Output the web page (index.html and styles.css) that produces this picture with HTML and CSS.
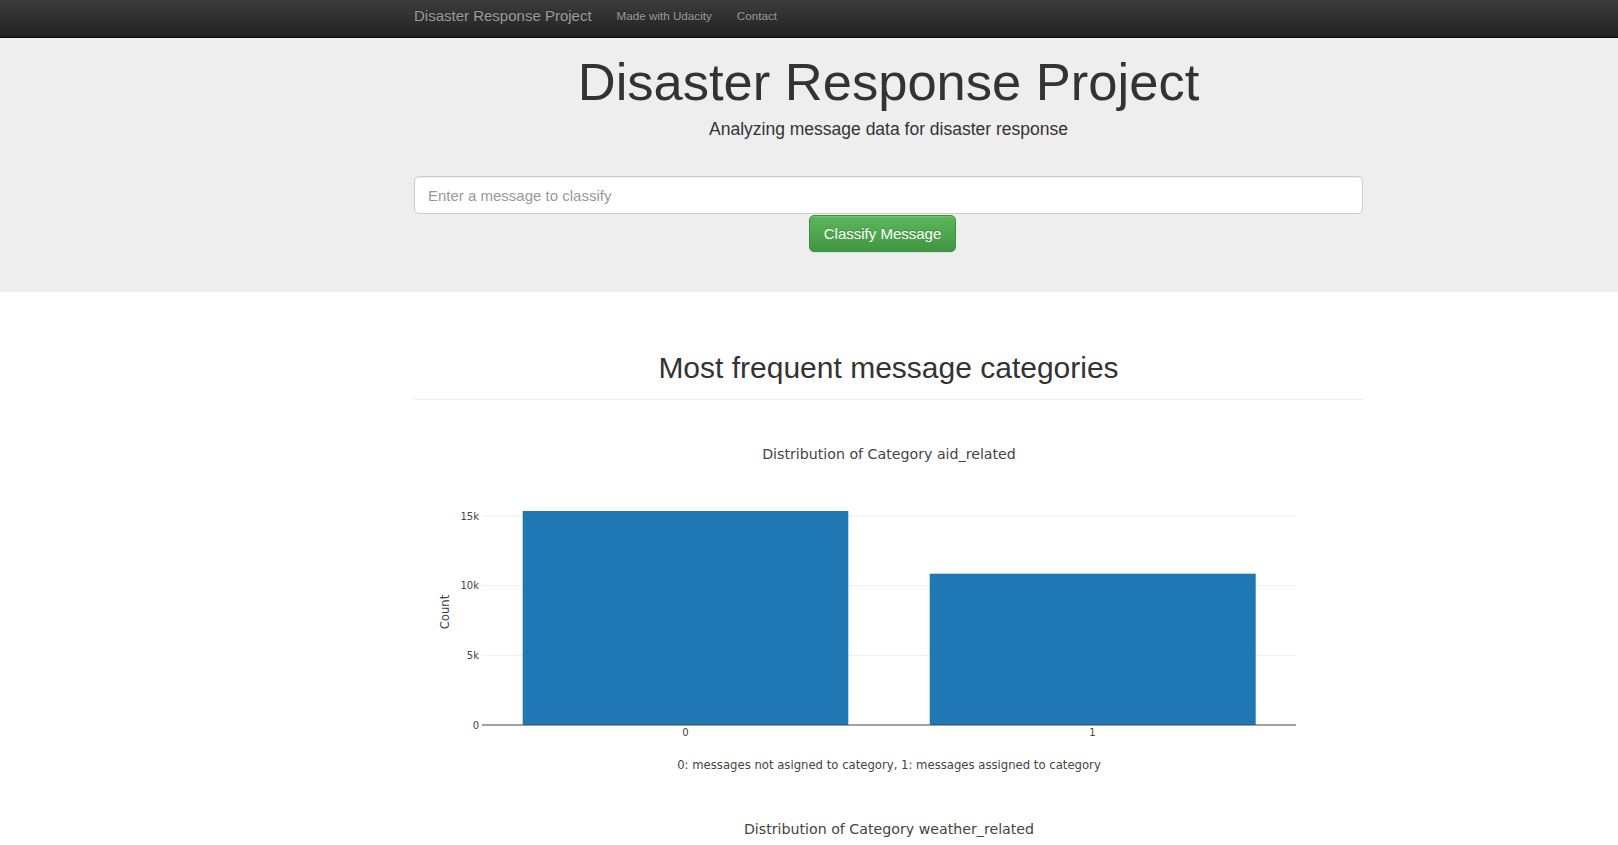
FILE: index.html
```html
<!DOCTYPE html>
<html lang="en">
<head>
<meta charset="utf-8">
<title>Disaster Response Project</title>
<link rel="stylesheet" href="styles.css">
</head>
<body>
<nav class="navbar">
  <div class="container nav-inner">
    <a class="brand" href="#">Disaster Response Project</a>
    <ul class="nav-links">
      <li><a href="#">Made with Udacity</a></li>
      <li><a href="#">Contact</a></li>
    </ul>
  </div>
</nav>

<div class="jumbotron">
  <div class="container">
    <h1 class="jumbo-title">Disaster Response Project</h1>
    <p class="jumbo-sub">Analyzing message data for disaster response</p>
    <form class="classify-form">
      <input class="query-input" type="text" placeholder="Enter a message to classify">
      <div class="btn-row">
        <button type="button" class="btn-success">Classify Message</button>
      </div>
    </form>
  </div>
</div>

<div class="container main">
  <h1 class="section-title">Most frequent message categories</h1>
  <hr class="divider">

  <div class="chart">
    <svg width="949" height="375" viewBox="0 0 949 375">
      <text class="c-title" x="475" y="42">Distribution of Category aid_related</text>
      <line class="grid" x1="68" y1="104" x2="882" y2="104"/>
      <line class="grid" x1="68" y1="173.7" x2="882" y2="173.7"/>
      <line class="grid" x1="68" y1="243.3" x2="882" y2="243.3"/>
      <rect class="bar" x="108.7" y="99" width="325.6" height="214"/>
      <rect class="bar" x="515.7" y="161.7" width="326" height="151.3"/>
      <line class="zero" x1="68" y1="313" x2="882" y2="313"/>
      <text class="ytick" x="65" y="104">15k</text>
      <text class="ytick" x="65" y="173.7">10k</text>
      <text class="ytick" x="65" y="243.3">5k</text>
      <text class="ytick" x="65" y="313">0</text>
      <text class="xtick" x="271.5" y="317">0</text>
      <text class="xtick" x="678.5" y="317">1</text>
      <text class="axis-title" x="475" y="353">0: messages not asigned to category, 1: messages assigned to category</text>
      <text class="axis-title" transform="translate(31 200) rotate(-90)" x="0" y="0">Count</text>
    </svg>
  </div>

  <div class="chart">
    <svg width="949" height="375" viewBox="0 0 949 375">
      <text class="c-title" x="475" y="42">Distribution of Category weather_related</text>
      <line class="grid" x1="68" y1="256.4" x2="882" y2="256.4"/>
      <line class="grid" x1="68" y1="199.8" x2="882" y2="199.8"/>
      <line class="grid" x1="68" y1="143.2" x2="882" y2="143.2"/>
      <rect class="bar" x="108.7" y="98.7" width="325.6" height="214.3"/>
      <rect class="bar" x="515.7" y="230.3" width="326" height="82.7"/>
      <line class="zero" x1="68" y1="313" x2="882" y2="313"/>
      <text class="ytick" x="65" y="143.2">15k</text>
      <text class="ytick" x="65" y="199.8">10k</text>
      <text class="ytick" x="65" y="256.4">5k</text>
      <text class="ytick" x="65" y="313">0</text>
      <text class="xtick" x="271.5" y="317">0</text>
      <text class="xtick" x="678.5" y="317">1</text>
      <text class="axis-title" x="475" y="353">0: messages not asigned to category, 1: messages assigned to category</text>
      <text class="axis-title" transform="translate(31 200) rotate(-90)" x="0" y="0">Count</text>
    </svg>
  </div>
</div>
</body>
</html>
```

FILE: styles.css
```css
* { box-sizing: border-box; }

html, body {
  margin: 0;
  padding: 0;
}

body {
  font-family: "Liberation Sans", Arial, Helvetica, sans-serif;
  color: #333;
  background: #fff;
}

.container {
  width: 949px;
  margin-left: 414px;
}

/* Navbar */
.navbar {
  height: 38px;
  background-image: linear-gradient(to bottom, #3c3c3c 0, #222 100%);
  border-bottom: 1px solid #080808;
}

.nav-inner {
  display: flex;
  align-items: flex-start;
  height: 37px;
}

.brand {
  font-size: 15px;
  line-height: 32px;
  color: #9d9d9d;
  text-decoration: none;
  text-shadow: 0 -1px 0 rgba(0,0,0,.25);
  margin-right: 12.5px;
  white-space: nowrap;
}

.nav-links {
  display: flex;
  list-style: none;
  margin: 0;
  padding: 0;
}

.nav-links a {
  display: block;
  padding: 0 12.5px;
  font-size: 11.67px;
  line-height: 32px;
  color: #9d9d9d;
  text-decoration: none;
  text-shadow: 0 -1px 0 rgba(0,0,0,.25);
  white-space: nowrap;
}

/* Jumbotron */
.jumbotron {
  background: #eee;
  padding: 15px 0 40px;
}

.jumbo-title {
  margin: 0;
  text-align: center;
  font-weight: 500;
  font-size: 52.5px;
  line-height: 58px;
  color: #333;
}

.jumbo-sub {
  margin: 6px 0 0;
  text-align: center;
  font-size: 17.5px;
  line-height: 24.5px;
  font-weight: 300;
}

.classify-form {
  margin-top: 34px;
}

.query-input {
  display: block;
  width: 100%;
  height: 38px;
  padding: 9px 13px 7px;
  font-family: inherit;
  font-size: 15px;
  color: #555;
  background: #fff;
  border: 1px solid #ccc;
  border-radius: 5px;
  box-shadow: inset 0 1px 1px rgba(0,0,0,.075);
  outline: none;
}

.query-input::placeholder {
  color: #999;
}

.btn-row {
  display: flex;
  margin-top: 1px;
}

.btn-success {
  margin-left: 395px;
  width: 147px;
  height: 37px;
  padding: 0;
  font-family: inherit;
  font-size: 15px;
  color: #fff;
  text-shadow: 0 -1px 0 rgba(0,0,0,.2);
  background-image: linear-gradient(to bottom, #5cb85c 0, #419641 100%);
  border: 1px solid #3e8f3e;
  border-radius: 5px;
  box-shadow: inset 0 1px 0 rgba(255,255,255,.15), 0 1px 1px rgba(0,0,0,.075);
  cursor: pointer;
}

/* Main */
.section-title {
  margin: 59px 0 0;
  text-align: center;
  font-weight: 500;
  font-size: 30px;
  line-height: 33px;
  color: #333;
}

.divider {
  margin: 15px 0 0;
  border: 0;
  border-top: 1px solid #eee;
  height: 0;
}

.chart {
  margin-top: 12px;
  height: 375px;
}

.chart + .chart {
  margin-top: 0;
}

.chart svg {
  display: block;
  font-family: "DejaVu Sans", Verdana, sans-serif;
}

.c-title {
  font-size: 14.2px;
  fill: #444;
  text-anchor: middle;
  dominant-baseline: central;
}

.grid {
  stroke: #eee;
  stroke-width: 1;
}

.zero {
  stroke: #444;
  stroke-width: 1;
}

.bar {
  fill: #1f77b4;
}

.ytick {
  font-size: 10px;
  fill: #444;
  text-anchor: end;
  dominant-baseline: central;
}

.xtick {
  font-size: 10px;
  fill: #444;
  text-anchor: middle;
  dominant-baseline: hanging;
}

.axis-title {
  font-size: 11.67px;
  fill: #444;
  text-anchor: middle;
  dominant-baseline: central;
}
```
